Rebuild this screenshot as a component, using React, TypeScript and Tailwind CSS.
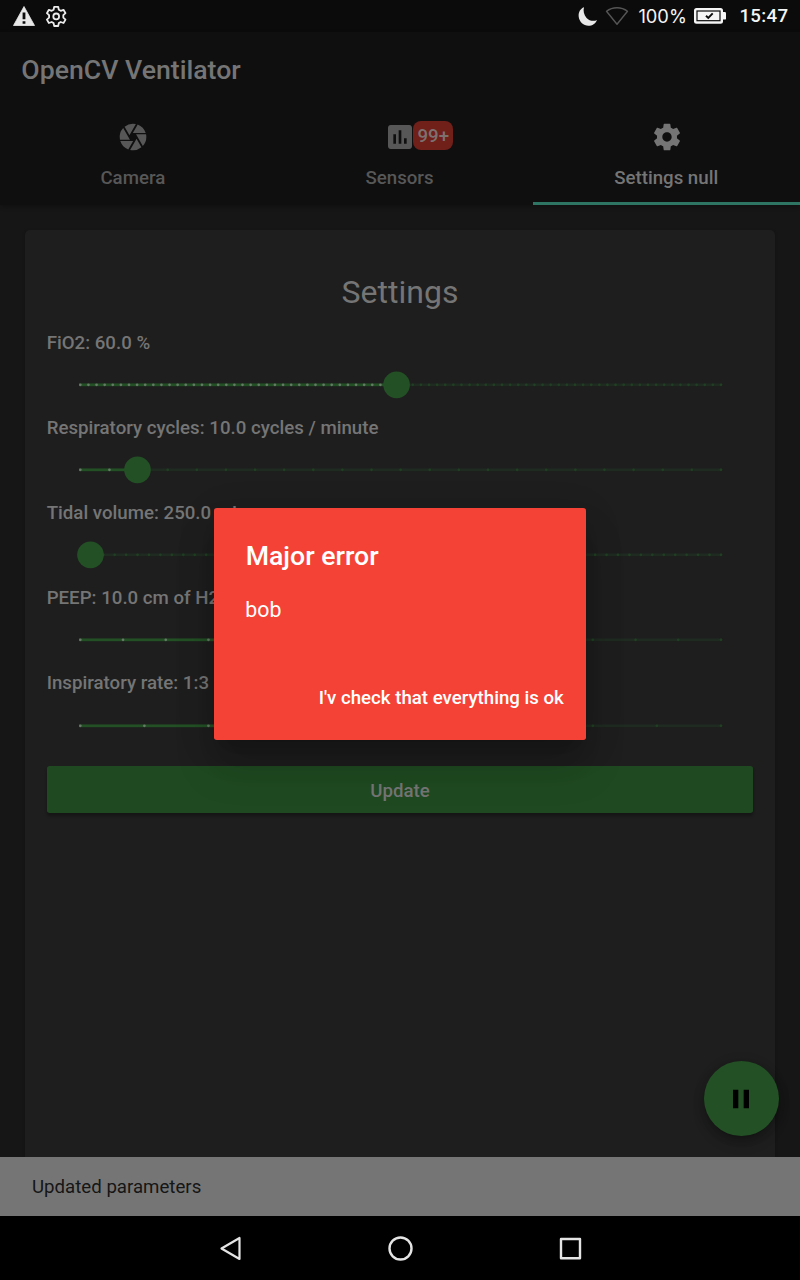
import type { ReactNode } from "react";
import { MdAssessment, MdCamera } from "react-icons/md";

const SETTINGS_PATH =
  "M19.43 12.98c.04-.32.07-.64.07-.98s-.03-.66-.07-.98l2.11-1.65c.19-.15.24-.42.12-.64l-2-3.46c-.12-.22-.39-.3-.61-.22l-2.49 1c-.52-.4-1.08-.73-1.69-.98l-.38-2.65C14.46 2.18 14.25 2 14 2h-4c-.25 0-.46.18-.49.42l-.38 2.65c-.61.25-1.17.59-1.69.98l-2.49-1c-.23-.09-.49 0-.61.22l-2 3.46c-.13.22-.07.49.12.64l2.11 1.65c-.04.32-.07.65-.07.98s.03.66.07.98l-2.11 1.65c-.19.15-.24.42-.12.64l2 3.46c.12.22.39.3.61.22l2.49-1c.52.4 1.08.73 1.69.98l.38 2.65c.03.24.24.42.49.42h4c.25 0 .46-.18.49-.42l.38-2.65c.61-.25 1.17-.59 1.69-.98l2.49 1c.23.09.49 0 .61-.22l2-3.46c.12-.22.07-.49-.12-.64l-2.11-1.65zM12 15.5c-1.93 0-3.5-1.57-3.5-3.5s1.57-3.5 3.5-3.5 3.5 1.57 3.5 3.5-1.57 3.5-3.5 3.5z";

function StatusBar() {
  return (
    <div className="flex h-8 shrink-0 items-center bg-[#0b0b0b] pl-[13px] pr-[11px] text-[#f5f5f5]">
      <svg className="h-8 w-[22px]" viewBox="0 0 22 32">
        <path d="M11 6.500 21.500 25.500H.5Z" fill="#e8e8e8" stroke="#e8e8e8" strokeWidth="0.800" strokeLinejoin="round" />
        <path d="M9.600 12.500h2.800v6.800H9.600zM9.600 21.200h2.800v2.500H9.600z" fill="#0b0b0b" />
      </svg>
      <svg className="ml-[9.300px] h-6 w-6" viewBox="0 0 24 24" fill="none" stroke="#ececec" strokeWidth="1.800">
        <g transform="translate(0.2 0.4)">
          <path
            strokeLinejoin="round"
            d="M10 2.400h4l.6 2.900 1.900 1.100 2.800-1 2 3.400-2.200 2v2.400l2.200 2-2 3.400-2.800-1-1.900 1.100-.6 2.900h-4l-.6-2.900-1.900-1.100-2.800 1-2-3.400 2.200-2v-2.400l-2.200-2 2-3.400 2.800 1 1.900-1.100z"
          />
          <circle cx="12" cy="12" r="2.900" />
        </g>
      </svg>
      <div className="grow" />
      <svg className="h-8 w-5" viewBox="0 0 20 32">
        <path
          d="M6 7.300C2.300 8.500.2 12.500.7 16.700c.7 5.200 4.900 9 9.700 9 3.900 0 7.200-2.100 8.600-5.800-3.200 1.700-7.600 1-10.400-2C5.900 15 5 11 6 7.300Z"
          fill="#e8e8e8"
        />
      </svg>
      <svg className="ml-[6.500px] h-8 w-6" viewBox="0 0 24 32">
        <path d="M1.500 11.200C7.500 6.500 16.500 6.500 22.500 11.200L12 24.200Z" fill="none" stroke="#555" strokeWidth="1.400" strokeLinejoin="round" />
      </svg>
      <span className="ml-[9.500px] w-[50px] whitespace-nowrap font-['Inter',sans-serif] text-[18.3px] leading-8">100%</span>
      <svg className="ml-[5.500px] h-8 w-[32px]" viewBox="0 0 32 32">
        <rect x="0" y="8" width="29" height="15.700" rx="2.500" fill="#f5f5f5" />
        <rect x="28" y="12" width="4" height="7.600" rx="1.200" fill="#f5f5f5" />
        <rect x="3" y="11" width="23" height="9.700" fill="none" stroke="#0b0b0b" strokeWidth="1.200" />
        <path d="m12 15.800 2.300 2.200 4.400-4.600" fill="none" stroke="#0b0b0b" strokeWidth="1.900" />
      </svg>
      <span className="ml-[13.500px] mr-[0.500px] whitespace-nowrap text-[18.67px] font-medium leading-8 tracking-[0.35px]">15:47</span>
    </div>
  );
}

function Tab({ label, active, children }: { label: string; active?: boolean; children: ReactNode }) {
  return (
    <div
      className={
        active
          ? "flex flex-1 flex-col items-center border-b-[3px] border-[#2e7564] pt-[14.33px] text-[#757575]"
          : "flex flex-1 flex-col items-center pt-[14.33px] text-[#575757]"
      }
    >
      <div className="relative flex h-8 w-8 items-center justify-center">{children}</div>
      <span className="mr-[1px] mt-[14.500px] text-[18.67px] font-medium leading-[22px]">{label}</span>
    </div>
  );
}

const TRACK = 643.3;

function Slider({ divisions, value, last }: { divisions: number; value: number; last?: boolean }) {
  const x = (value / divisions) * TRACK;
  const ticks = Array.from({ length: divisions + 1 }, (_, i) => i);
  return (
    <svg className={last ? "ml-8 mt-[1px] h-16 w-[644px] overflow-visible" : "ml-8 h-16 w-[644px] overflow-visible"} viewBox="0 0 644 64">
      <rect x="0" y="30.500" width={TRACK} height="2.670" fill="#1f2a20" />
      <rect x="0" y="30.500" width={x} height="2.670" fill="#235125" />
      {ticks.map((i) => (
        <circle
          key={i}
          cx={1.33 + (i / divisions) * (TRACK - 2.67)}
          cy="31.830"
          r="1.330"
          fill={i <= value ? "#667a67" : "#214023"}
        />
      ))}
      <circle cx={x} cy="31.830" r="13.330" fill="#235125" />
    </svg>
  );
}

const PARAMETERS = [
  { label: "FiO2: 60.0 %", divisions: 79, value: 39 },
  { label: "Respiratory cycles: 10.0 cycles / minute", divisions: 22, value: 2 },
  { label: "Tidal volume: 250.0 mL", divisions: 56, value: 1 },
  { label: "PEEP: 10.0 cm of H2O", divisions: 15, value: 5 },
  { label: "Inspiratory rate: 1:3", divisions: 10, value: 3 },
];

function SettingsCard() {
  return (
    <section className="mx-[25.330px] mt-[25px] flex grow flex-col rounded-t-[5px] bg-[#1e1e1e] px-[21.330px] pt-[41px] text-[#757575] shadow-[0_1px_3px_rgba(0,0,0,0.25)]">
      <h1 className="text-center text-[32px] leading-[42px]">Settings</h1>
      <div className="mt-[18.700px] flex flex-col">
        {PARAMETERS.map((p, i) => (
          <div key={p.label} className="flex flex-col">
            <span className="h-[21px] text-[18.67px] font-medium leading-[23px] tracking-[0.01px]">{p.label}</span>
            <Slider divisions={p.divisions} value={p.value} last={i === PARAMETERS.length - 1} />
          </div>
        ))}
      </div>
      <button className="mt-[8px] h-[47.400px] shrink-0 rounded-[2.670px] bg-[#1f4a21] pt-[2px] text-[18.67px] font-medium shadow-[0_3px_3px_rgba(0,0,0,0.3)]">
        Update
      </button>
    </section>
  );
}

function NavBar() {
  return (
    <nav className="flex h-16 shrink-0 items-center justify-center gap-[138px] bg-black">
      <svg className="h-8 w-8" viewBox="0 0 32 32" fill="none" stroke="#e4e4e4" strokeWidth="2.200" strokeLinejoin="round">
        <path d="M7.500 16.500 25.500 6V27Z" />
      </svg>
      <svg className="h-8 w-8" viewBox="0 0 32 32" fill="none" stroke="#e4e4e4" strokeWidth="2.400">
        <circle cx="16.500" cy="16.500" r="11" />
      </svg>
      <svg className="h-8 w-8" viewBox="0 0 32 32" fill="none" stroke="#e4e4e4" strokeWidth="2.400" strokeLinejoin="round">
        <rect x="7" y="7" width="19" height="19.300" />
      </svg>
    </nav>
  );
}

function ErrorDialog() {
  return (
    <div role="dialog" className="absolute inset-0 flex items-start justify-center pt-[508.300px]">
      <div className="flex h-[231.400px] w-[372.670px] flex-col rounded-[2.670px] bg-[#f44336] text-white shadow-[0_15px_20px_-9px_rgba(0,0,0,0.2),0_28px_40px_0_rgba(0,0,0,0.16),0_8px_40px_0_rgba(0,0,0,0.1)]">
        <h2 className="px-8 pt-[33px] text-[26.67px] font-medium leading-[31px]">Major error</h2>
        <p className="px-[31.700px] pt-[25px] text-[21.33px] leading-[25px]">bob</p>
        <div className="flex grow items-end justify-end pb-[30px] pr-[22.500px]">
          <button className="text-[18.67px] font-medium leading-[24px]">I'v check that everything is ok</button>
        </div>
      </div>
    </div>
  );
}

export default function App() {
  return (
    <div className="relative flex h-[1280px] w-[800px] flex-col overflow-hidden bg-[#161616] font-['Roboto',sans-serif]">
      <StatusBar />
      <header className="z-10 flex h-[173.330px] shrink-0 flex-col bg-[#0f0f0f] shadow-[0_2px_4px_rgba(0,0,0,0.25)]">
        <div className="flex h-[74.670px] items-center px-[21.330px] pt-[2px] text-[26.67px] font-medium text-[#757575]">
          OpenCV Ventilator
        </div>
        <div className="flex grow">
          <Tab label="Camera">
            <MdCamera className="h-8 w-8" />
          </Tab>
          <Tab label="Sensors">
            <MdAssessment className="h-8 w-8" />
            <span className="absolute left-[29.300px] top-0 flex h-[29.500px] w-10 items-center justify-center rounded-[8px] bg-[#701f19] text-[18.67px] font-medium text-[#7d7170]">
              99+
            </span>
          </Tab>
          <Tab label="Settings null" active>
            <svg className="h-8 w-8" viewBox="0 0 24 24" fill="currentColor">
              <path d={SETTINGS_PATH} />
            </svg>
          </Tab>
        </div>
      </header>
      <main className="flex min-h-0 grow flex-col">
        <SettingsCard />
      </main>
      <div className="flex h-[58.670px] shrink-0 items-center bg-[#757575] px-8 text-[18.67px] text-[#161616]">
        Updated parameters
      </div>
      <NavBar />
      <button
        aria-label="Pause"
        className="absolute left-[704px] top-[1061.330px] flex h-[74.670px] w-[74.670px] items-center justify-center rounded-full bg-[#235125] shadow-[0_4px_7px_-1px_rgba(0,0,0,0.2),0_8px_13px_rgba(0,0,0,0.14),0_1px_14px_rgba(0,0,0,0.08)]"
      >
        <svg className="h-8 w-8" viewBox="0 0 24 24" fill="#000">
          <path d="M6 19h4V5H6v14zm8-14v14h4V5h-4z" />
        </svg>
      </button>
      <ErrorDialog />
    </div>
  );
}
